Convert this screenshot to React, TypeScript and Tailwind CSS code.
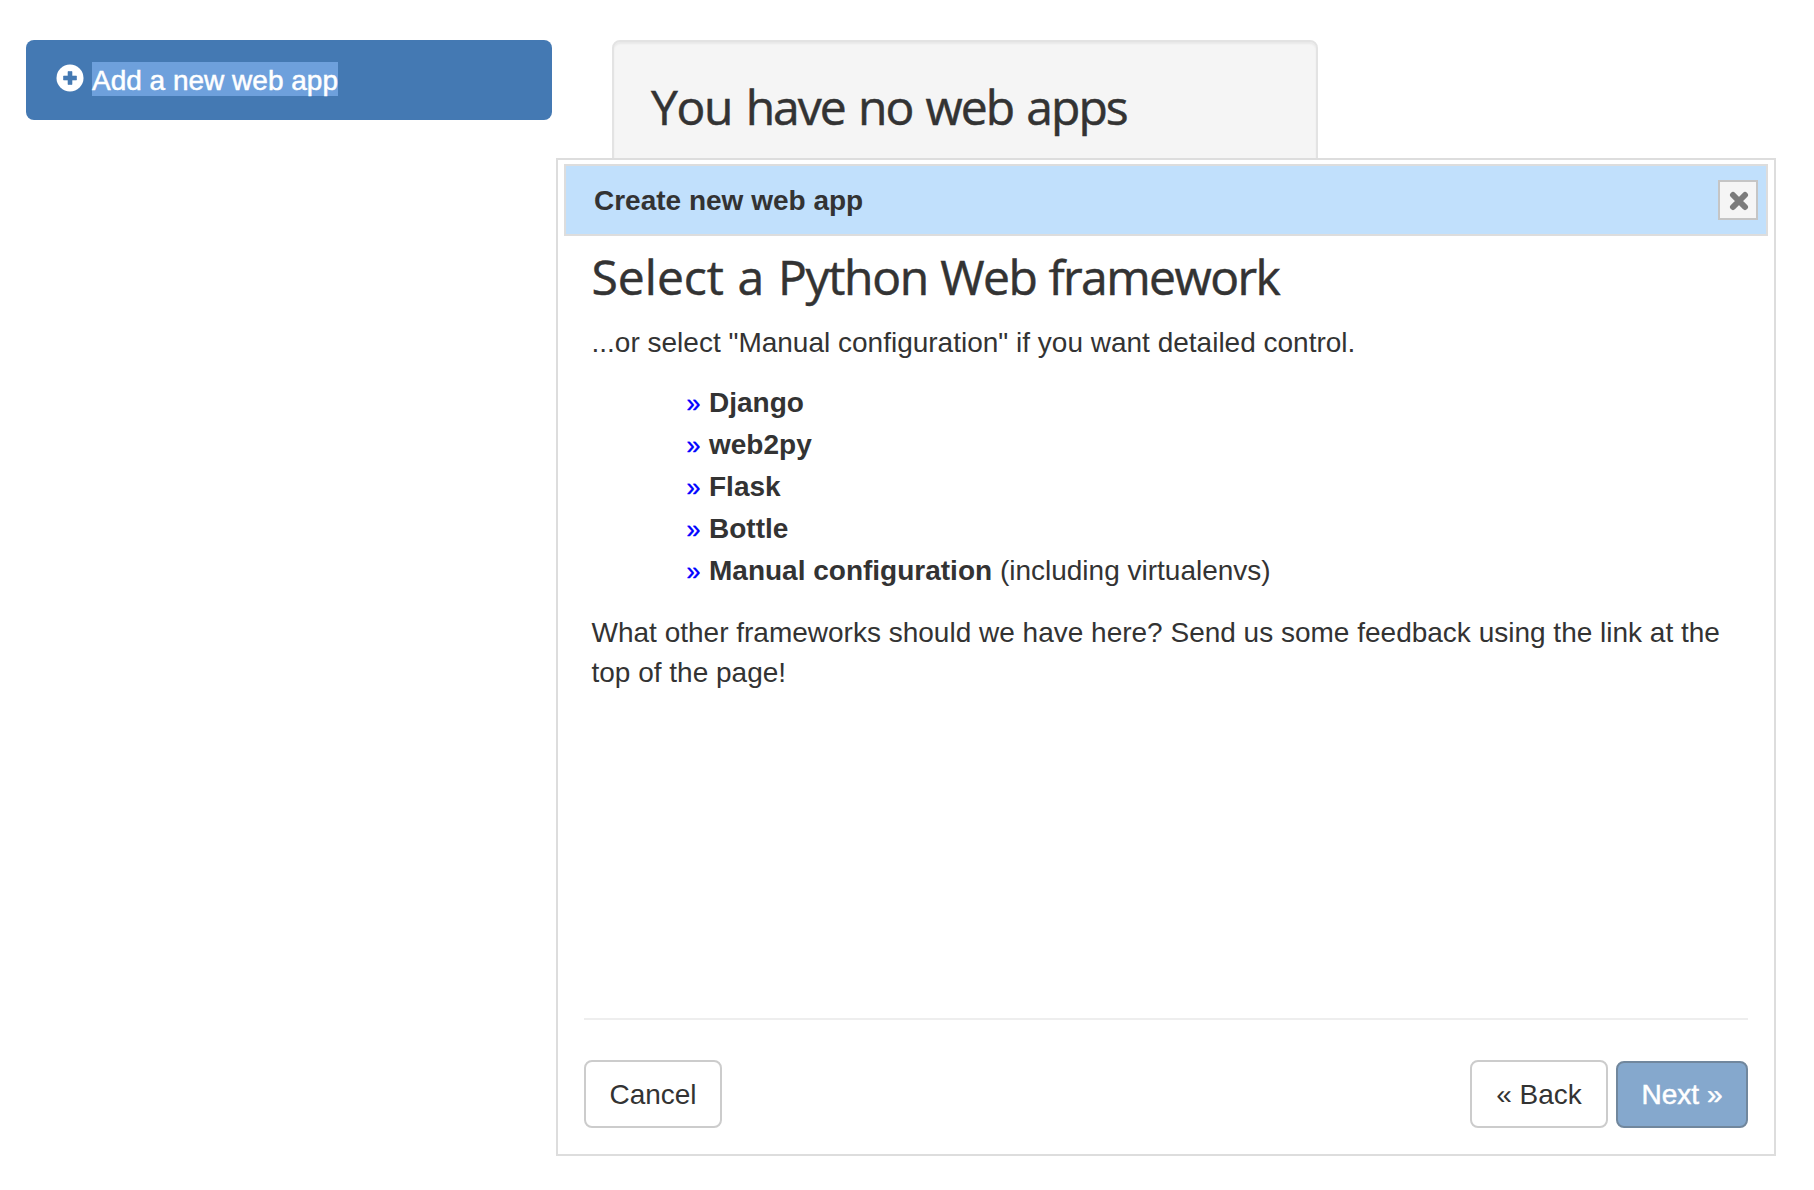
const frameworks = [
  { name: 'Django' },
  { name: 'web2py' },
  { name: 'Flask' },
  { name: 'Bottle' },
  { name: 'Manual configuration', note: '(including virtualenvs)' },
];

const heading = "font-['Open_Sans',sans-serif] font-normal whitespace-pre [-webkit-text-stroke:0.5px_#333333]";

function PlusIcon() {
  return (
    <svg width="28" height="28" viewBox="0 0 28 28" className="mt-[4px] shrink-0">
      <circle cx="14" cy="14" r="13.5" fill="#fff" />
      <path d="M12 7.5h4V12h4.5v4H16v4.5h-4V16H7.5v-4H12z" fill="#4479b3" stroke="#4479b3" strokeWidth="0.6" strokeLinejoin="round" />
    </svg>
  );
}

function CloseIcon() {
  return (
    <svg width="20" height="20" viewBox="0 0 20 20">
      <path d="M4 4L16 16M16 4L4 16" stroke="#7b7b7b" strokeWidth="6" strokeLinecap="round" />
    </svg>
  );
}

function Dialog() {
  return (
    <section className="absolute left-[556px] top-[158px] flex h-[998px] w-[1220px] flex-col border-2 border-[#dddddd] bg-white px-[6px] pt-[4px]">
      <header className="flex h-[72px] shrink-0 items-start justify-between border-2 border-[#dddddd] bg-[#c1e0fc] pl-[28px] pr-[8px] pt-[14px]">
        <h3 className="mt-px font-bold">Create new web app</h3>
        <button className="flex h-[40px] w-[40px] items-center justify-center border-2 border-[#c5c5c5] bg-[#f5f5f5] pl-[2px] pt-[2px]">
          <CloseIcon />
        </button>
      </header>
      <div className="flex-1 pl-[27.5px] pr-[28px] pt-[10px]">
        <h2 className={`${heading} mb-[23px] h-[54px] text-[48px] leading-[62px] [word-spacing:1.2px]`}>
          Select a <span className="tracking-[-1.3px]">Python </span>
          <span className="tracking-[-1.55px]">Web framework</span>
        </h2>
        <p>...or select "Manual configuration" if you want detailed control.</p>
        <ul className="mt-[20px] pl-[95px]">
          {frameworks.map((f) => (
            <li key={f.name} className="flex h-[42px]">
              <span className="w-[22.5px] text-[25px] leading-[41px] text-[#0000ff] [-webkit-text-stroke:0.4px_#0000ff]">»</span>
              <span>
                <b>{f.name}</b>
                {f.note && ` ${f.note}`}
              </span>
            </li>
          ))}
        </ul>
        <p className="mt-[20px]">
          What other frameworks should we have here? Send us some feedback using the link at the top of the page!
        </p>
      </div>
      <footer className="mx-[20px] flex h-[136px] shrink-0 items-start gap-[8px] border-t-2 border-[#eeeeee] pt-[40px]">
        <button className="mr-auto h-[68px] w-[138px] rounded-[8px] border-2 border-[#cccccc] bg-white pt-[2px]">Cancel</button>
        <button className="h-[68px] w-[138px] rounded-[8px] border-2 border-[#cccccc] bg-white pt-[2px]">« Back</button>
        <button className="mt-px h-[67px] w-[132px] rounded-[8px] border-2 border-[#71879d] bg-[#85a8cd] pt-px text-white [-webkit-text-stroke:0.5px_#ffffff]">
          Next »
        </button>
      </footer>
    </section>
  );
}

export default function App() {
  return (
    <main className="relative h-[1190px] w-[1814px] overflow-hidden bg-white font-['Liberation_Sans',Arial,sans-serif] text-[28px] leading-[40px] text-[#333333]">
      <div className="flex items-start gap-[60px] pl-[26px] pt-[40px]">
        <a className="flex h-[80px] w-[526px] gap-[8px] rounded-[8px] bg-[#4479b3] pl-[30px] pt-[20px] text-white">
          <PlusIcon />
          <span className="mt-[2px] h-[34px] bg-[#6ea0dc] leading-[38px] [-webkit-text-stroke:0.5px_#ffffff]">Add a new web app</span>
        </a>
        <div className="h-[160px] w-[706px] rounded-[8px] border-2 border-[#e3e3e3] bg-[#f5f5f5] pl-[37px] pt-[34px] shadow-[inset_0_2px_2px_rgba(0,0,0,0.05)]">
          <h2 className={`${heading} text-[48px] leading-[61px] [word-spacing:2.6px]`}>
            <span className="tracking-[-1.4px]">You </span>
            <span className="tracking-[-1.95px]">have no web apps</span>
          </h2>
        </div>
      </div>
      <Dialog />
    </main>
  );
}
